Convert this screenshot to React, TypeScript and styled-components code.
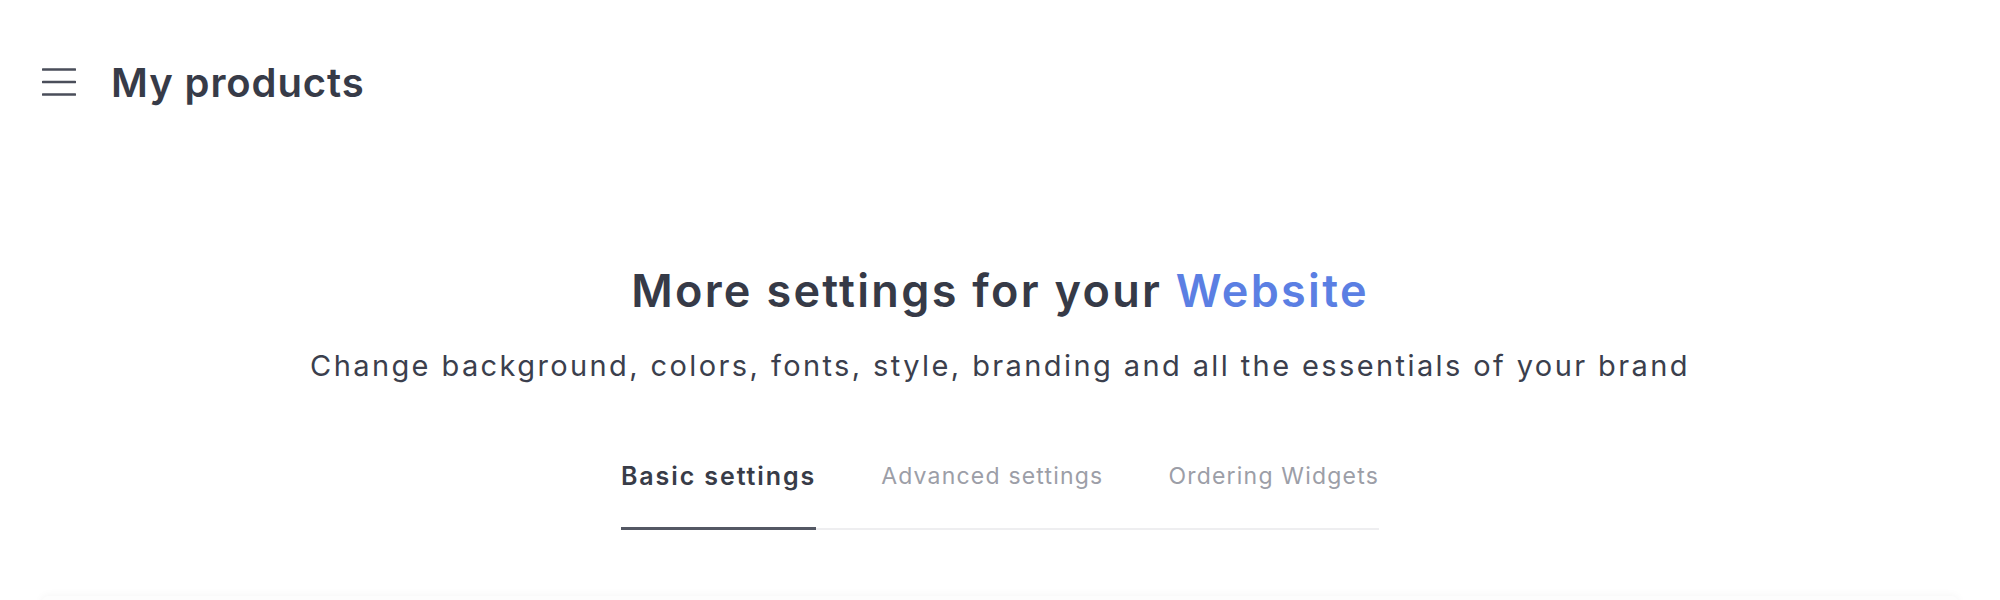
import React, { useState } from 'react';
import styled, { createGlobalStyle } from 'styled-components';

const GlobalStyle = createGlobalStyle`
  body {
    margin: 0;
    background: #ffffff;
    font-family: Inter, "Noto Sans", sans-serif;
    color: #363a47;
  }
`;

const Page = styled.div`
  width: 2000px;
  height: 600px;
  overflow: hidden;
`;

const Header = styled.header`
  display: flex;
  align-items: center;
  gap: 35px;
  height: 64px;
  margin-top: 50px;
  padding-left: 42px;
`;

const MenuButton = styled.button`
  display: flex;
  padding: 0;
  border: none;
  background: none;
  cursor: pointer;
`;

const PageTitle = styled.h1`
  margin: 0;
  font-size: 40px;
  font-weight: 600;
  letter-spacing: 0.9px;
  color: #373b48;
`;

const Hero = styled.section`
  display: flex;
  flex-direction: column;
  align-items: center;
  margin-top: 149px;
`;

const Heading = styled.h2`
  margin: 0;
  font-size: 45px;
  font-weight: 600;
  line-height: 56px;
  letter-spacing: 2.3px;
  color: #363a47;
`;

const Accent = styled.span`
  color: #5b7fe3;
`;

const Subheading = styled.p`
  margin: 29px 0 0;
  font-size: 29px;
  line-height: 36px;
  font-weight: 400;
  letter-spacing: 2.4px;
  color: #3b3f4d;
`;

const Tabs = styled.nav`
  display: flex;
  gap: 65px;
  margin-top: 76px;
  border-bottom: 2px solid #eeeef0;
`;

const Tab = styled.button<{ $active?: boolean }>`
  padding: 0 0 35px;
  margin-bottom: -2px;
  border: none;
  border-bottom: 3px solid ${(p) => (p.$active ? '#545864' : 'transparent')};
  background: none;
  font-family: inherit;
  line-height: 32px;
  font-size: ${(p) => (p.$active ? '25px' : '23px')};
  font-weight: ${(p) => (p.$active ? 600 : 400)};
  letter-spacing: ${(p) => (p.$active ? '1.9px' : '1.2px')};
  color: ${(p) => (p.$active ? '#383c48' : '#9c9ea7')};
  cursor: pointer;
`;

const Card = styled.div`
  margin: 66px 42px 0;
  height: 200px;
  border-radius: 6px;
  background: #fdfdfd;
  box-shadow: 0 0 10px rgba(0, 0, 0, 0.05);
`;

const MenuIcon = () => (
  <svg width="34" height="28" viewBox="0 0 34 28" fill="none">
    <path d="M1 1.5h32M1 14h32M1 26.5h32" stroke="#4a4e5a" strokeWidth="2.6" strokeLinecap="round" />
  </svg>
);

const tabs = ['Basic settings', 'Advanced settings', 'Ordering Widgets'];

const App = () => {
  const [active, setActive] = useState(0);

  return (
    <Page>
      <GlobalStyle />
      <Header>
        <MenuButton aria-label="Menu">
          <MenuIcon />
        </MenuButton>
        <PageTitle>My products</PageTitle>
      </Header>
      <Hero>
        <Heading>
          More settings for your <Accent>Website</Accent>
        </Heading>
        <Subheading>
          Change background, colors, fonts, style, branding and all the essentials of your brand
        </Subheading>
        <Tabs>
          {tabs.map((t, i) => (
            <Tab key={t} $active={i === active} onClick={() => setActive(i)}>
              {t}
            </Tab>
          ))}
        </Tabs>
      </Hero>
      <Card />
    </Page>
  );
};

export default App;
